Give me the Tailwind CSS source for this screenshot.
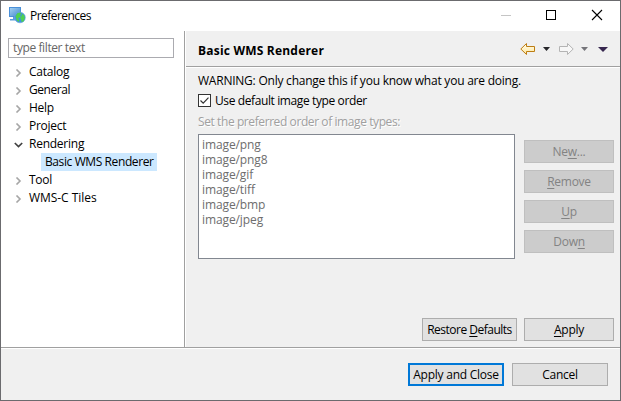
<!DOCTYPE html>
<html lang="en">
<head>
<meta charset="utf-8">
<title>Preferences</title>
<script src="https://cdn.jsdelivr.net/npm/@tailwindcss/browser@4"></script>
</head>
<body class="w-[621px] h-[401px] overflow-hidden">
<div class="flex flex-col w-[621px] h-[401px] border border-[#6b6b6e] bg-[#f0f0f0] font-['Open_Sans','Noto_Sans',sans-serif] text-[12px] leading-[18px] tracking-[-0.25px] text-black whitespace-nowrap">
  <header class="flex h-[30px] shrink-0 bg-white">
    <svg class="ml-[8px] mt-[6px] w-[17px] h-[17px]" viewBox="0 0 17 17">
      <defs><linearGradient id="scr" x1="0" y1="0" x2="1" y2="1"><stop offset="0" stop-color="#a9d4f3"/><stop offset="1" stop-color="#3f87cf"/></linearGradient></defs>
      <rect x=".5" y=".5" width="11" height="9" fill="url(#scr)" stroke="#4a90d9"/>
      <path d="M4 10h4v2h2v1.500H1V12h3z" fill="#5a9bdb"/>
      <circle cx="11" cy="10.500" r="5.300" fill="#3d8fe6" stroke="#74a9e2" stroke-width=".7"/>
      <path d="M6.500 9l2-3 3-.5 1 1-1.500 1.500 1 1-2 2-1 .5 1.500 1.500-1 2-2-2zM13 6.500l2.500 2 .3 3-1.300 3-2 .5-.5-2.500-1-1.500 1.500-2z" fill="#4fd052"/>
    </svg>
    <h1 class="ml-[4px] mt-[6px] tracking-[-0.55px]">Preferences</h1>
    <div class="ml-auto flex">
      <svg class="w-[121px] h-[30px]" viewBox="0 0 121 30" fill="none" shape-rendering="crispEdges"><path d="M2 14.500h10" stroke="#c5c5c5"/><rect x="47.500" y="9.500" width="9" height="9" stroke="#000"/><path d="M93 9l10 10M103 9l-10 10" stroke="#000" shape-rendering="auto" stroke-width="1.100"/></svg>
    </div>
  </header>
  <main class="flex h-[316px] shrink-0">
    <aside class="w-[184px] shrink-0 border-r border-[#a0a0a0] bg-white pt-[7px]">
      <div class="ml-[7px] w-[166px] h-[20px] border border-[#ababb0] pl-[4px] text-[#666] tracking-[-0.4px]"><span>type filter text</span></div>
      <ul class="mt-[5px]">
        <li class="flex h-[18px]"><svg class="ml-[14px] mt-[6px] mr-[6px] w-[8px] h-[8px]" viewBox="0 0 8 8" fill="none" stroke="#a6a6a6" stroke-width="1.600"><path d="M1.500.5L5 4 1.500 7.500"/></svg><span>Catalog</span></li>
        <li class="flex h-[18px] tracking-[-0.45px]"><svg class="ml-[14px] mt-[6px] mr-[6px] w-[8px] h-[8px]" viewBox="0 0 8 8" fill="none" stroke="#a6a6a6" stroke-width="1.600"><path d="M1.500.5L5 4 1.500 7.500"/></svg><span>General</span></li>
        <li class="flex h-[18px]"><svg class="ml-[14px] mt-[6px] mr-[6px] w-[8px] h-[8px]" viewBox="0 0 8 8" fill="none" stroke="#a6a6a6" stroke-width="1.600"><path d="M1.500.5L5 4 1.500 7.500"/></svg><span>Help</span></li>
        <li class="flex h-[18px]"><svg class="ml-[14px] mt-[6px] mr-[6px] w-[8px] h-[8px]" viewBox="0 0 8 8" fill="none" stroke="#a6a6a6" stroke-width="1.600"><path d="M1.500.5L5 4 1.500 7.500"/></svg><span>Project</span></li>
        <li class="flex h-[18px]"><svg class="ml-[13px] mt-[6px] mr-[6px] w-[9px] h-[8px]" viewBox="0 0 9 8" fill="none" stroke="#404040" stroke-width="1.700"><path d="M.8 2L4.500 5.500 8.200 2"/></svg><span>Rendering</span></li>
        <li class="ml-[40px] w-[116px] h-[18px] bg-[#cce8ff] pl-[4px] tracking-[-0.4px]"><span>Basic WMS Renderer</span></li>
        <li class="flex h-[18px]"><svg class="ml-[14px] mt-[6px] mr-[6px] w-[8px] h-[8px]" viewBox="0 0 8 8" fill="none" stroke="#a6a6a6" stroke-width="1.600"><path d="M1.500.5L5 4 1.500 7.500"/></svg><span>Tool</span></li>
        <li class="flex h-[18px] tracking-[-0.05px]"><svg class="ml-[14px] mt-[6px] mr-[6px] w-[8px] h-[8px]" viewBox="0 0 8 8" fill="none" stroke="#a6a6a6" stroke-width="1.600"><path d="M1.500.5L5 4 1.500 7.500"/></svg><span>WMS-C Tiles</span></li>
      </ul>
    </aside>
    <section class="flex-1 border-l border-white">
      <div class="flex h-[36px] border-b border-[#a0a0a0] pl-[12px]">
        <h2 class="mt-[11px] font-bold tracking-[0.2px]">Basic WMS Renderer</h2>
        <svg class="ml-auto w-[102px] h-[35px]" viewBox="0 0 102 35">
          <defs><linearGradient id="arr" x1="0" y1="0" x2="0" y2="1"><stop offset="0" stop-color="#fffdf0"/><stop offset="1" stop-color="#ffe79a"/></linearGradient></defs>
          <path d="M2.800 18L8.500 12.500V15.500H16.500V20.500H8.500V23.500z" fill="url(#arr)" stroke="#bd7d12" stroke-linejoin="round"/>
          <path d="M25 16h7l-3.500 4z" fill="#26262a"/>
          <path d="M55.200 18L49.500 12.500V15.500H41.500V20.500H49.500V23.500z" fill="#f7f7f7" stroke="#b4b4b4" stroke-linejoin="round"/>
          <path d="M63 16h7l-3.500 4z" fill="#75757a"/>
          <path d="M80 16h10l-5 5z" fill="#37274f"/>
        </svg>
      </div>
      <div class="border-t border-white pl-[12px]">
        <p class="mt-[4px] tracking-[-0.23px]"><span>WARNING: Only change this if you know what you are doing.</span></p>
        <label class="mt-[2px] flex h-[18px] tracking-[-0.39px]"><svg class="mt-[2px] mr-[4px] w-[13px] h-[13px]" viewBox="0 0 13 13"><rect x=".5" y=".5" width="12" height="12" fill="#fff" stroke="#333"/><path d="M2.500 6.500l2.700 2.700 5.300-5.600" fill="none" stroke="#333" stroke-width="1.200"/></svg><span>Use default image type order</span></label>
        <p class="mt-[3px] text-[#a0a0a0] tracking-[-0.41px] [text-shadow:1px_1px_0_#fff]"><span>Set the preferred order of image types:</span></p>
        <div class="mt-[3px] flex">
          <ul class="w-[317px] h-[125px] border border-[#828790] bg-white pl-[3px] pt-[2px] leading-[15px] tracking-[-0.1px] text-[#6d6d6d]">
            <li>image/png</li><li>image/png8</li><li>image/gif</li><li>image/tiff</li><li>image/bmp</li><li>image/jpeg</li>
          </ul>
          <div class="ml-[9px] mt-[6px] flex flex-col gap-[7px] text-[#838383]">
            <button class="w-[90px] h-[23px] border border-[#bfbfbf] bg-[#ccc]">Ne<u class="underline-offset-2">w</u>...</button>
            <button class="w-[90px] h-[23px] border border-[#bfbfbf] bg-[#ccc]"><u class="underline-offset-2">R</u>emove</button>
            <button class="w-[90px] h-[23px] border border-[#bfbfbf] bg-[#ccc]"><u class="underline-offset-2">U</u>p</button>
            <button class="w-[90px] h-[23px] border border-[#bfbfbf] bg-[#ccc]">Dow<u class="underline-offset-2">n</u></button>
          </div>
        </div>
        <div class="mt-[59px] flex justify-end gap-[7px] pr-[6px]">
          <button class="w-[95px] h-[23px] border border-[#adadad] bg-[#e1e1e1] tracking-[-0.5px]">Restore <u class="underline-offset-2">D</u>efaults</button>
          <button class="w-[90px] h-[23px] border border-[#adadad] bg-[#e1e1e1]"><u class="underline-offset-2">A</u>pply</button>
        </div>
      </div>
    </section>
  </main>
  <footer class="flex-1 border-t border-[#a0a0a0]">
    <div class="flex justify-end gap-[8px] border-t border-white pt-[14px] pr-[12px]">
      <button class="w-[96px] h-[23px] border-2 border-[#0078d7] bg-[#e1e1e1]">Apply and Close</button>
      <button class="w-[96px] h-[23px] border border-[#adadad] bg-[#e1e1e1]">Cancel</button>
    </div>
  </footer>
</div>
</body>
</html>
